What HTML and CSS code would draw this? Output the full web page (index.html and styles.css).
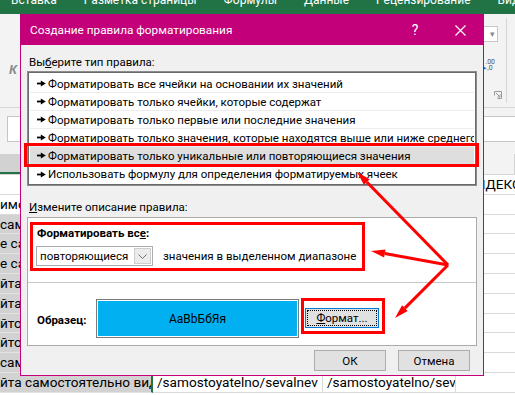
FILE: index.html
```html
<!DOCTYPE html>
<html lang="ru">
<head>
<meta charset="utf-8">
<title>Создание правила форматирования</title>
<link rel="stylesheet" href="styles.css">
</head>
<body>
<div class="app">
  <div class="tabs">
    <span class="tab">Вставка</span>
    <span class="tab">Разметка страницы</span>
    <span class="tab">Формулы</span>
    <span class="tab">Данные</span>
    <span class="tab">Рецензирование</span>
    <span class="tab">Вид</span>
  </div>
  <div class="ribbon">
    <div class="rib-left"><span class="ital">К</span></div>
    <div class="rib-right">
      <div class="rib-col">
        <div class="rcombo"><span class="rcombo-arrow">▾</span></div>
        <div class="decimal"><span class="d1">.00</span><span class="d2"><span class="blue">▸</span>,0</span></div>
        <div class="launcher">
          <svg width="8" height="8" viewBox="0 0 8 8"><path d="M0.5 4.5V0.5H7.5V7.5H3.5" fill="none" stroke="#9a9a9a" stroke-width="1"/><path d="M2 2L6 6M6 3.5V6H3.5" fill="none" stroke="#9a9a9a" stroke-width="1"/></svg>
        </div>
      </div>
      <div class="rib-sep"></div>
    </div>
  </div>
  <div class="fbar"><div class="namebox"></div><div class="finput"></div></div>
  <div class="colhead"><div class="ch chA"></div><div class="ch chB"></div><div class="ch chC"></div><div class="ch chD"></div></div>
  <div class="grid">
    <div class="row"><div class="cell cA"></div><div class="cell cB"></div><div class="cell cC"></div><div class="cell cD">ИНДЕКС</div></div>
    <div class="row"><div class="cell cA act">имости сайта</div><div class="cell cB"></div><div class="cell cC"></div><div class="cell cD"></div></div>
    <div class="row"><div class="cell cA sel">самостоятельно</div><div class="cell cB"></div><div class="cell cC"></div><div class="cell cD"></div></div>
    <div class="row"><div class="cell cA sel">е сайта самостоятельно</div><div class="cell cB"></div><div class="cell cC"></div><div class="cell cD"></div></div>
    <div class="row"><div class="cell cA sel">е сайта самостоятельно</div><div class="cell cB"></div><div class="cell cC"></div><div class="cell cD"></div></div>
    <div class="row"><div class="cell cA sel">йта самостоятельно</div><div class="cell cB"></div><div class="cell cC"></div><div class="cell cD"></div></div>
    <div class="row"><div class="cell cA sel">йта самостоятельно</div><div class="cell cB"></div><div class="cell cC"></div><div class="cell cD"></div></div>
    <div class="row"><div class="cell cA sel">йтов самостоятельно</div><div class="cell cB"></div><div class="cell cC"></div><div class="cell cD"></div></div>
    <div class="row"><div class="cell cA sel">йтов самостоятельно</div><div class="cell cB"></div><div class="cell cC"></div><div class="cell cD"></div></div>
    <div class="row"><div class="cell cA sel">самостоятельно</div><div class="cell cB"></div><div class="cell cC"></div><div class="cell cD"></div></div>
    <div class="row"><div class="cell cA sel">йта самостоятельно вид</div><div class="cell cB">/samostoyatelno/sevalnev</div><div class="cell cC">/samostoyatelno/sevalnev</div><div class="cell cD"></div></div>
  </div>

  <div class="dialog">
    <div class="titlebar">
      <span class="title">Создание правила форматирования</span>
      <span class="tb-help">?</span>
      <span class="tb-close"><svg width="11" height="11" viewBox="0 0 11 11"><path d="M0.5 0.5L10.5 10.5M10.5 0.5L0.5 10.5" stroke="#fff" stroke-width="1.2"/></svg></span>
    </div>
    <div class="body">
      <div class="lbl">Вы<u>б</u>ерите тип правила:</div>
      <div class="listbox">
        <div class="item"><svg class="arr" width="9" height="7" viewBox="0 0 9 7"><path d="M0 3.5H4.5" stroke="#000" stroke-width="1.8"/><path d="M3.8 0.6L8.8 3.5L3.8 6.4Z" fill="#000"/></svg>Форматировать все ячейки на основании их значений</div>
        <div class="item"><svg class="arr" width="9" height="7" viewBox="0 0 9 7"><path d="M0 3.5H4.5" stroke="#000" stroke-width="1.8"/><path d="M3.8 0.6L8.8 3.5L3.8 6.4Z" fill="#000"/></svg>Форматировать только ячейки, которые содержат</div>
        <div class="item"><svg class="arr" width="9" height="7" viewBox="0 0 9 7"><path d="M0 3.5H4.5" stroke="#000" stroke-width="1.8"/><path d="M3.8 0.6L8.8 3.5L3.8 6.4Z" fill="#000"/></svg>Форматировать только первые или последние значения</div>
        <div class="item"><svg class="arr" width="9" height="7" viewBox="0 0 9 7"><path d="M0 3.5H4.5" stroke="#000" stroke-width="1.8"/><path d="M3.8 0.6L8.8 3.5L3.8 6.4Z" fill="#000"/></svg>Форматировать только значения, которые находятся выше или ниже среднего</div>
        <div class="item hl"><svg class="arr" width="9" height="7" viewBox="0 0 9 7"><path d="M0 3.5H4.5" stroke="#000" stroke-width="1.8"/><path d="M3.8 0.6L8.8 3.5L3.8 6.4Z" fill="#000"/></svg>Форматировать только уникальные или повторяющиеся значения</div>
        <div class="item last"><svg class="arr" width="9" height="7" viewBox="0 0 9 7"><path d="M0 3.5H4.5" stroke="#000" stroke-width="1.8"/><path d="M3.8 0.6L8.8 3.5L3.8 6.4Z" fill="#000"/></svg>Использовать формулу для определения форматируемых ячеек</div>
      </div>
      <div class="lbl lbl2"><u>И</u>змените описание правила:</div>
      <div class="panel">
        <div class="ptop">
          <div class="redgrp">
            <div class="grp-label">Форматировать вс<u>е</u>:</div>
            <div class="grp-row">
              <div class="combo"><span>повторяющиеся</span><span class="combo-btn"><svg width="9" height="5" viewBox="0 0 9 5"><path d="M0.5 0.5L4.5 4.5L8.5 0.5" fill="none" stroke="#707070" stroke-width="1"/></svg></span></div>
              <span class="grp-text">значения в выделенном диапазоне</span>
            </div>
          </div>
        </div>
        <div class="pbottom">
          <div class="sample-lbl">Образец:</div>
          <div class="preview"><div class="preview-in">AaBbБбЯя</div></div>
          <div class="redbtn"><div class="fmtbtn"><span class="focus"><u>Ф</u>ормат...</span></div></div>
        </div>
      </div>
      <div class="btns">
        <div class="btn">ОК</div>
        <div class="btn">Отмена</div>
      </div>
    </div>
  </div>

  <div class="redrow"></div>

  <svg class="arrows" width="515" height="395" viewBox="0 0 515 395">
    <g stroke="#ff0000" stroke-width="3" fill="none">
      <line x1="448" y1="265" x2="366.8" y2="182"/>
      <line x1="448" y1="265" x2="384.8" y2="253.5"/>
      <line x1="448" y1="265" x2="404.9" y2="308.1"/>
    </g>
    <g fill="#ff0000">
      <polygon points="357,172 369.7,179.2 363.9,184.8"/>
      <polygon points="371,251 385.5,249.6 384.1,257.4"/>
      <polygon points="395,318 402.1,305.3 407.7,310.9"/>
    </g>
  </svg>
</div>
</body>
</html>
```

FILE: styles.css
```css
* { box-sizing: border-box; }
body { margin: 0; }

.app {
  position: relative;
  width: 515px;
  height: 395px;
  overflow: hidden;
  background: #fff;
  font-family: Roboto, "Noto Sans", sans-serif;
  color: #000;
}

/* ---------- Excel background ---------- */
.tabs {
  height: 14px;
  background: #217346;
  display: flex;
  gap: 27px;
  padding-left: 11px;
  overflow: hidden;
  color: #fff;
  font-size: 12px;
  white-space: nowrap;
}
.tab { line-height: 16px; margin-top: -8px; }

.ribbon {
  height: 93px;
  background: #f3f3f3;
  display: flex;
  justify-content: space-between;
}
.rib-left { padding: 45px 0 0 9px; }
.ital {
  font-family: "Liberation Sans", sans-serif;
  font-style: italic;
  font-weight: bold;
  font-size: 13px;
  line-height: 16px;
  color: #8a8a8a;
}
.rib-right { display: flex; width: 48px; }
.rib-col {
  width: 39px;
  display: flex;
  flex-direction: column;
  align-items: flex-end;
  padding-top: 12px;
}
.rcombo {
  width: 31px;
  height: 16px;
  margin-right: 8px;
  border: 1px solid #c8c8c8;
  background: #fff;
  display: flex;
  justify-content: flex-end;
  align-items: center;
  padding-right: 2px;
}
.rcombo-arrow { font-size: 9px; color: #8a8a8a; line-height: 9px; }
.decimal {
  margin-top: 17px;
  margin-right: 11px;
  display: flex;
  flex-direction: column;
  font-size: 7px;
  line-height: 6px;
  color: #555;
}
.decimal .d1 { padding-left: 2px; }
.blue { color: #2b6cc4; }
.launcher { margin-top: 20px; margin-right: 4px; line-height: 0; }
.rib-sep { width: 1px; background: #d6d6d6; margin: 4px 0 4px 0; }

.fbar {
  border-top: 1px solid #d6d6d6;
  background: #f3f3f3;
  padding: 8px 0 12px 7px;
  display: flex;
}
.namebox { width: 120px; height: 26px; background: #fff; border: 1px solid #c6c6c6; }
.finput { flex: 1; margin-left: 150px; height: 26px; background: #fff; border: 1px solid #c6c6c6; border-right: none; }

.colhead {
  display: flex;
  height: 21px;
  background: #f3f3f3;
  border-bottom: 1px solid #d4d4d4;
}
.ch { border-right: 1px solid #d4d4d4; }
.chA { width: 153px; background: #d2d2d2; border-bottom: 2px solid #217346; }
.chB { width: 170px; }
.chC { width: 133px; }
.chD { flex: 1; }

.row { display: flex; height: 19.8px; }
.cell {
  overflow: hidden;
  white-space: nowrap;
  font-size: 13.6px;
  line-height: 18.8px;
  border-right: 1px solid #dadada;
  border-bottom: 1px solid #dadada;
}
.cA { width: 153px; }
.cB { width: 170px; padding-left: 4px; }
.cC { width: 133px; padding-left: 4px; }
.cD { flex: 1; padding-left: 10px; border-right: none; }
.cA.act { border-right: 2px solid #217346; }
.cA.sel { background: #d2d2d2; border-bottom-color: #e2e2e2; border-right: 2px solid #217346; }

/* ---------- Dialog ---------- */
.dialog {
  position: absolute;
  left: 20px;
  top: 14px;
  width: 464px;
  height: 362px;
  border: 1px solid #c3007a;
  background: #f0f0f0;
  display: flex;
  flex-direction: column;
  font-size: 11.5px;
}
.titlebar {
  height: 30px;
  background: #c3007a;
  color: #fff;
  display: flex;
  align-items: center;
  padding-left: 9px;
  padding-right: 1px;
  font-size: 11.8px;
}
.title { flex: 1; }
.tb-help { width: 46px; text-align: center; font-size: 14px; }
.tb-close { width: 44px; display: flex; justify-content: center; line-height: 0; }

.body {
  flex: 1;
  padding: 9px 6px 4px 6px;
  display: flex;
  flex-direction: column;
}
.lbl { line-height: 16px; padding-left: 2px; }
.lbl2 { margin-top: 13px; }

.listbox {
  margin-top: 1px;
  height: 115px;
  border: 1px solid #8c8c8c;
  box-shadow: inset 0 0 0 1px #6a6a6a;
  background: #fff;
  padding: 3px 2px 0 2px;
}
.item {
  height: 18px;
  display: flex;
  align-items: center;
  padding-left: 7px;
  border-bottom: 1px solid #ececec;
  white-space: nowrap;
  overflow: hidden;
}
.item.last { border-bottom: none; }
.item.hl { background: #dedede; }
.arr { flex: none; margin-right: 2px; }

.panel {
  margin-top: 2px;
  height: 129px;
  border: 1px solid #ababab;
  background: #fff;
  display: flex;
  flex-direction: column;
}
.ptop { height: 64px; padding: 4px 0 0 2px; }
.redgrp {
  width: 335px;
  height: 49px;
  border: 3px solid #ff0000;
  padding-left: 3px;
}
.grp-label { font-weight: bold; line-height: 16px; padding-left: 1px; }
.grp-row { display: flex; align-items: center; margin-top: 5px; white-space: nowrap; }
.combo {
  width: 117px;
  height: 20px;
  border: 1px solid #acacac;
  background: #fff;
  display: flex;
  align-items: center;
  justify-content: space-between;
  padding-left: 3px;
  padding-right: 1px;
}
.combo-btn {
  width: 17px;
  height: 16px;
  border: 1px solid #cdcdcd;
  background: #ececec;
  display: flex;
  align-items: center;
  justify-content: center;
}
.grp-text { margin-left: 10px; }

.pbottom {
  flex: 1;
  border-top: 1px solid #c8c8c8;
  display: flex;
  align-items: flex-start;
  padding-left: 9px;
}
.sample-lbl { width: 59px; margin-top: 29px; font-weight: bold; line-height: 16px; }
.preview {
  width: 203px;
  height: 39px;
  margin-top: 16px;
  border: 1px solid #7a7a7a;
  padding: 1px;
  background: #fff;
}
.preview-in {
  height: 100%;
  background: #00b0f0;
  display: flex;
  align-items: center;
  justify-content: center;
  font-size: 12px;
}
.redbtn {
  width: 84px;
  height: 36px;
  margin-top: 15px;
  margin-left: 2px;
  border: 3px solid #ff0000;
  padding: 7px 2px 0 1px;
}
.fmtbtn {
  width: 74px;
  height: 20px;
  border: 1px solid #0078d7;
  background: #e1e1e1;
  padding: 1px;
  display: flex;
}
.focus {
  flex: 1;
  border: 1px dotted #000;
  display: flex;
  align-items: center;
  justify-content: center;
}

.btns {
  display: flex;
  justify-content: flex-end;
  gap: 12px;
  margin-top: 4px;
  padding-right: 7px;
}
.btn {
  width: 72px;
  height: 21px;
  background: #e1e1e1;
  border: 1px solid #adadad;
  display: flex;
  align-items: center;
  justify-content: center;
}

/* ---------- Annotations ---------- */
.redrow {
  position: absolute;
  left: 24px;
  top: 143px;
  width: 455px;
  height: 24px;
  border: 3px solid #ff0000;
}
.arrows { position: absolute; left: 0; top: 0; pointer-events: none; }
```
